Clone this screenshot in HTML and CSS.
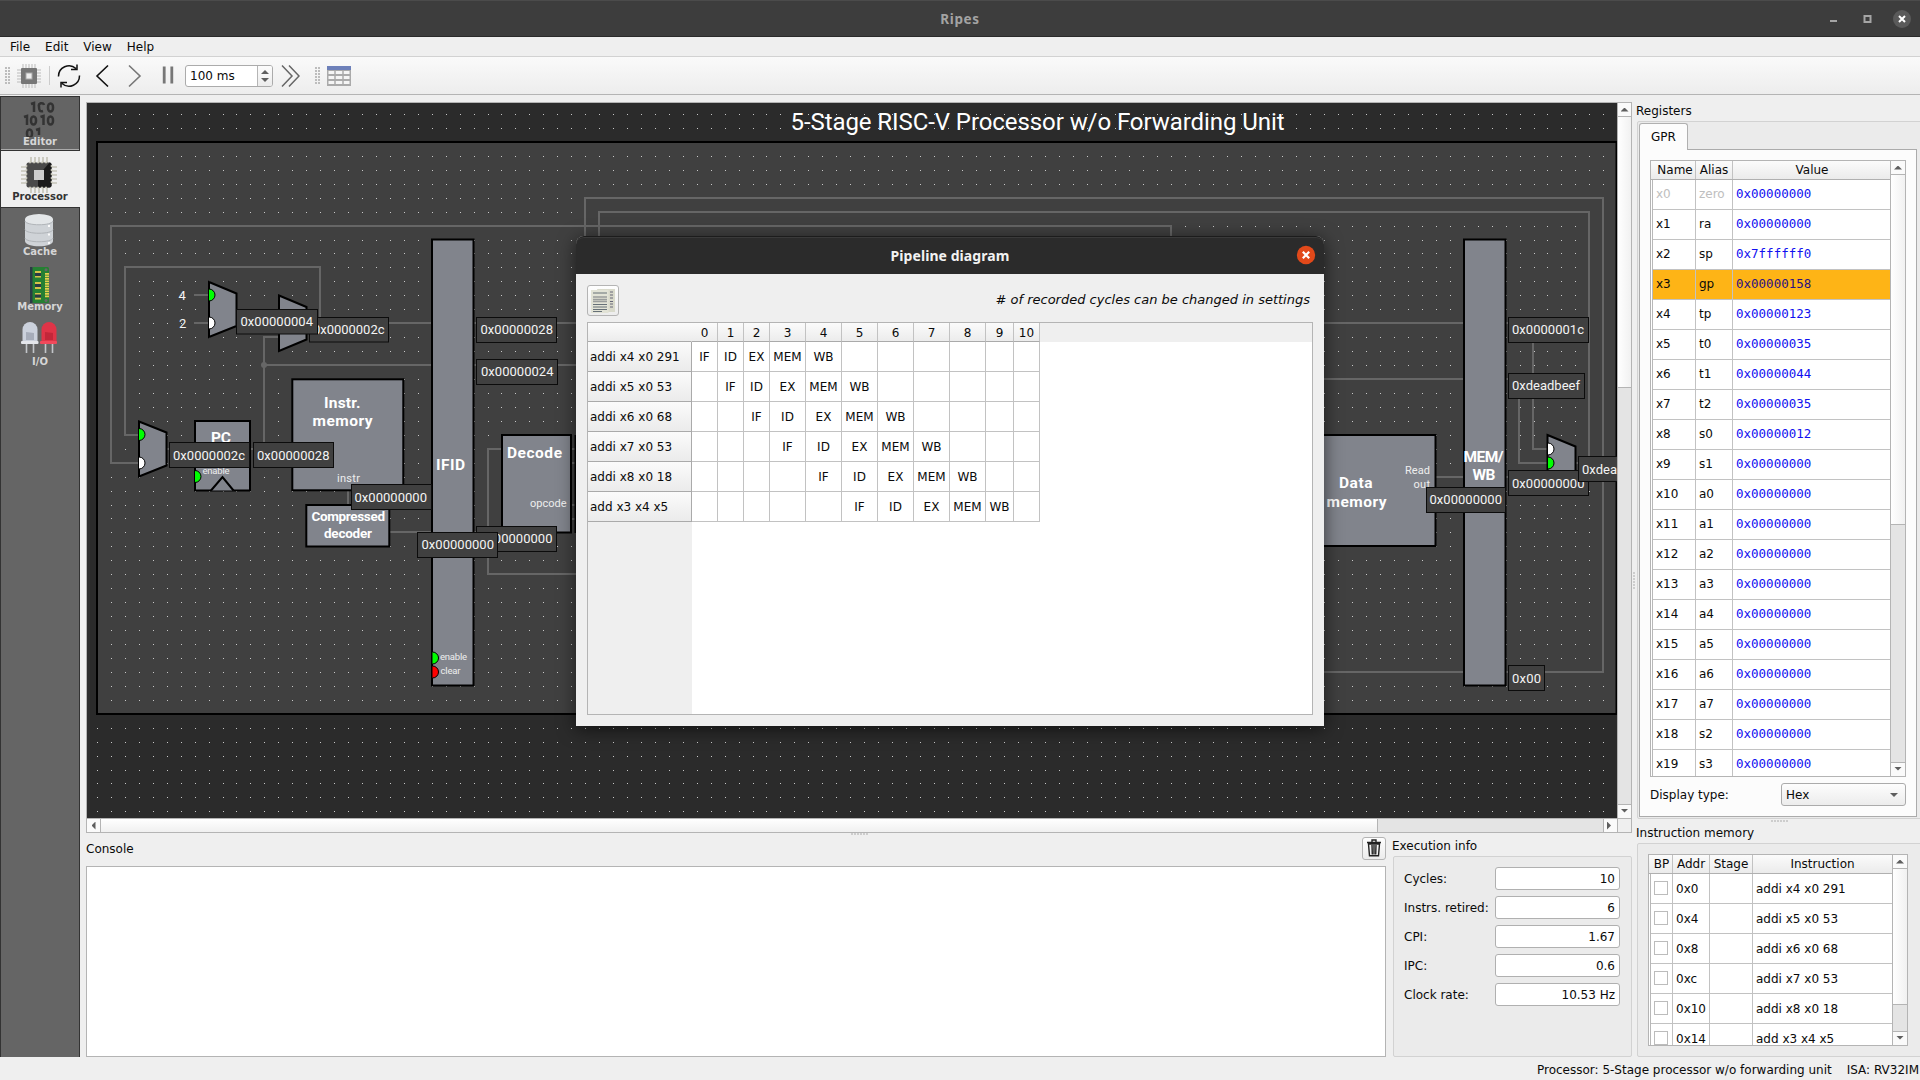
FILE: index.html
```html
<!DOCTYPE html>
<html lang="en">
<head>
<meta charset="utf-8">
<title>Ripes</title>
<link rel="stylesheet" href="styles.css">
</head>
<body>
<header class="titlebar">
  <span class="win-title">Ripes</span>
  <svg class="win-buttons" width="84" height="36" viewBox="0 0 84 36">
    <path d="M0 20h7" stroke="#a5a5a5" stroke-width="2"/>
    <rect x="34.500" y="15" width="6" height="6" fill="none" stroke="#a5a5a5" stroke-width="2"/>
    <circle cx="72" cy="18" r="9" fill="#5a5a5a"/>
    <path d="M69 15l6 6M75 15l-6 6" stroke="#fff" stroke-width="2"/>
  </svg>
</header>
<nav class="menubar"><span>File</span><span>Edit</span><span>View</span><span>Help</span></nav>
<div class="toolbar">
  <i class="grip"></i>
  <svg class="t-chip" width="24" height="24" viewBox="0 0 24 24">
    <path d="M6 0v24M9 0v24M12 0v24M15 0v24M18 0v24M0 6h24M0 9h24M0 12h24M0 15h24M0 18h24" stroke="#bbb"/>
    <rect x="4" y="4" width="16" height="16" rx="1" fill="#777"/><rect x="9" y="9" width="6" height="6" fill="#eee" stroke="#aaa"/>
  </svg>
  <i class="sep"></i>
  <svg class="t-reload" width="24" height="24" viewBox="0 0 24 24" fill="none" stroke="#111" stroke-width="1.500">
    <path d="M1.500 12.500A10.500 10.500 0 0 1 19 4.500M22.500 11.500A10.500 10.500 0 0 1 5 19.500M14 5.500h6V0.500M10 18.500H4v5"/>
  </svg>
  <svg class="t-back" width="14" height="24" viewBox="0 0 14 24" fill="none" stroke="#111" stroke-width="1.600"><path d="M13 1.500L2 12l11 10.500"/></svg>
  <svg class="t-next" width="14" height="24" viewBox="0 0 14 24" fill="none" stroke="#777" stroke-width="1.600"><path d="M1 1.500L12 12 1 22.500"/></svg>
  <svg class="t-pause" width="12" height="18" viewBox="0 0 12 18"><path d="M2.200 .5v17M9.800 .5v17" stroke="#777" stroke-width="2.800"/></svg>
  <div class="spin"><span>100 ms</span><div class="spin-arrows">
    <svg width="8" height="12" viewBox="0 0 8 12" fill="#5e5e5e"><path d="M0 4l4-4 4 4zM0 8l4 4 4-4z"/></svg></div></div>
  <svg class="t-ff" width="19" height="24" viewBox="0 0 19 24" fill="none" stroke="#666" stroke-width="1.500"><path d="M1 1.500L11 12 1 22.500M8 1.500L18 12 8 22.500"/></svg>
  <i class="grip grip2"></i>
  <svg class="t-table" width="24" height="20" viewBox="0 0 24 20"><rect width="24" height="20" fill="#aaa"/><rect width="24" height="4" fill="#6d80b9"/>
    <path d="M1.500 6.500h21M1.500 11.500h21M1.500 16.500h21" stroke="#f5f5f5" stroke-width="3"/><path d="M8 4v16M16 4v16" stroke="#aaa" stroke-width="1.500"/></svg>
</div>

<main class="main">
  <aside class="sidebar">
    <div class="tab tab-editor">
      <svg width="36" height="36" viewBox="0 0 36 36" fill="none" stroke="#333" stroke-width="2.500">
        <path d="M10 3l3-1v9M27 6a2.500 3.500 0 0 1 5 0v1a2.500 3.500 0 0 1-5 0zM23 4a2.500 2.500 0 0 0-5 1.500c0 4 1 5.500 4 4.500M3 16l3-1v9M19.500 16l3-1v9M10 19a2.500 3.500 0 0 1 5 0v1a2.500 3.500 0 0 1-5 0zM27 19a2.500 3.500 0 0 1 5 0v1a2.500 3.500 0 0 1-5 0zM6 32a2.500 3.500 0 0 1 5 0v1a2.500 3.500 0 0 1-5 0zM15 29l3-1v6"/>
      </svg><b>Editor</b></div>
    <div class="tab selected">
      <svg width="36" height="36" viewBox="0 0 36 36">
        <path d="M10 0v36M14 0v36M18 0v36M22 0v36M26 0v36M0 10h36M0 14h36M0 18h36M0 22h36M0 26h36" stroke="#c6c5b9" stroke-width="1.700"/>
        <rect x="5.500" y="5.500" width="25" height="25" rx="2" fill="#4a4a4a"/><path d="M28.500 5.500a2 2 0 0 1 2 2v21a2 2 0 0 1-2 2H17V19z" fill="#1b1b1b"/>
        <path d="M5.500 8v20M30.500 8v20M8 5.500h20M8 30.500h20" stroke="#c6c5b9" stroke-width="1.500" stroke-dasharray="2"/>
        <rect x="13" y="13" width="10" height="10" fill="#ccc"/></svg><b>Processor</b></div>
    <div class="tab">
      <svg width="36" height="36" viewBox="0 0 36 36"><path d="M4 7v22c0 7 28 7 28 0V7z" fill="#cfd3d7"/><ellipse cx="18" cy="7.500" rx="14" ry="5.500" fill="#e3e6e8"/>
        <path d="M4 9c1 5 27 5 28 0M4 17.500c1 5 27 5 28 0M4 26c1 5 27 5 28 0" fill="none" stroke="#b0b4b8"/><path d="M28 13v2M28 21.500v2M28 30v2" stroke="#fff" stroke-width="1.800"/></svg><b>Cache</b></div>
    <div class="tab">
      <svg width="36" height="36" viewBox="0 0 36 36"><rect x="11" y="0" width="17" height="36" rx="1.500" fill="#258033"/><rect x="9" y="0" width="2.500" height="36" fill="#2b3b45"/>
        <path d="M14 5h6M14 9.500h6M14 16h6M14 21h6M14 27h6M14 31.500h6" stroke="#d6c34a" stroke-width="2"/><path d="M14 7.500h6M14 18.500h6M14 29h6" stroke="#2b3b45" stroke-width="3"/>
        <path d="M26 6v25" stroke="#e5cf4e" stroke-width="4" stroke-dasharray="1.700 .8"/><circle cx="25" cy="2.800" r="1.500" fill="#666"/><circle cx="25" cy="33.500" r="1.500" fill="#666"/></svg><b>Memory</b></div>
    <div class="tab">
      <svg width="36" height="36" viewBox="0 0 36 36"><path d="M5.500 22v9M12.500 22v9M24.500 22v9M31.500 22v9" stroke="#c2c5c9" stroke-width="1.600"/>
        <path d="M1.500 20V7.500a7.500 7.500 0 0 1 15 0V20z" fill="#cbd1dc"/><path d="M20.500 20V7.500a7.500 7.500 0 0 1 15 0V20z" fill="#df3447"/>
        <path d="M5 10l8 1v7H5z" fill="#606878" opacity=".35"/><path d="M24 10l8 1v7h-8z" fill="#a01828" opacity=".45"/><rect x="0" y="19" width="17.500" height="3" rx="1" fill="#e4e6eb"/><rect x="19" y="19" width="17" height="3" rx="1" fill="#f0495b"/></svg><b>I/O</b></div>
  </aside>

  <section class="center">
    <div class="view">
      <svg class="diagram" width="1530" height="715" viewBox="87 103 1530 715">
        <rect x="87" y="103" width="1530" height="715" fill="#2b2b2b"/>
        <rect x="97" y="142" width="1519.500" height="572" fill="#404040"/>
        <path id="dots" fill="none" stroke="#c8c8c8"/>
        <rect x="97" y="142" width="1519.500" height="572" fill="none" stroke="#000" stroke-width="2"/>
        <g class="wires">
          <path d="M139 463H109M109 463M139 435H125V267H320V323H432M139 463H109M194 295h14M194 323h14M279 337H264V449H195M264 365H432M474 323H600M474 365H600M167 449h28M250 449h43" stroke="none"/>
          <path d="M139 463H111V226H1171v60M139 435H125V267H320V323H432M194 295h14M194 323h14M279 337H264V449H195M264 365H432M474 323H600M474 365H600M167 449h28M250 449h43"/>
          <path d="M585 240V198H1603V672H1300M599 240V212H1589V463H1575M502 449H488V574H600M348 490v15M390 532h42M474 532h14M570 449h8M570 463h8M570 505h8M570 519h8"/>
          <path d="M1300 323H1464M1300 379H1464M1506 323H1533V449H1547M1506 379H1519V463H1547M1436 477h28M1506 477h8M1506 672h8"/>
        </g>
        <circle cx="264" cy="365" r="3" fill="#666"/>
        <g class="blocks">
          <rect x="432" y="239.500" width="41.500" height="446"/><rect x="1464" y="239.500" width="41.500" height="446"/>
          <rect x="292.300" y="379.300" width="111" height="111"/><rect x="306.300" y="505" width="83" height="41.500"/>
          <rect x="195" y="421" width="55" height="69.500"/><rect x="502" y="435" width="69" height="97.500"/>
          <rect x="1300" y="435" width="135.500" height="111"/>
          <path d="M209 282l27.500 11.500v32.500l-27.500 11zM279 295.500l27.500 11.500v32.500l-27.500 11.500zM139 421.500l27.500 11v33l-27.500 11zM1547.500 435l28 11.500v32.500l-28 11.500zM211 490.500l11.500-13.500 11 13.500"/>
          <path d="M575.500 435v98"/>
        </g>
        <g stroke="#000">
          <path d="M209 289a6 6 0 0 1 0 12M139 428.500a6 6 0 0 1 0 12M195 470.500a6 6 0 0 1 0 12M432.500 652a6 6 0 0 1 0 12M1548 457a6 6 0 0 1 0 12" fill="#0f0"/>
          <path d="M209 317a6 6 0 0 1 0 12M139 457a6 6 0 0 1 0 12M1548 443a6 6 0 0 1 0 12" fill="#fff"/>
          <path d="M432.500 666a6 6 0 0 1 0 12" fill="#f00"/>
        </g>
        <g class="names">
          <text x="211" y="442.500" textLength="20">PC</text><text x="324" y="408" textLength="36.500">Instr.</text><text x="312.500" y="426" textLength="60">memory</text>
          <text x="436" y="470" textLength="29">IFID</text><text x="507" y="458" textLength="55">Decode</text>
          <text class="sm" x="311.500" y="521" textLength="73.500">Compressed</text><text class="sm" x="324" y="538" textLength="48">decoder</text>
          <text x="1339" y="488" textLength="33.500">Data</text><text x="1326.500" y="507" textLength="60">memory</text>
          <text x="1463.500" y="462" textLength="40">MEM/</text><text x="1472.500" y="480" textLength="23">WB</text>
        </g>
        <g class="ports">
          <text x="337" y="482" textLength="23">instr</text><text x="530" y="507" textLength="36.500">opcode</text>
          <text x="1405" y="474" textLength="25">Read</text><text x="1413.500" y="488" textLength="16.500">out</text>
          <text class="xs" x="202.500" y="474" textLength="27">enable</text><text class="xs" x="440" y="660" textLength="27">enable</text><text class="xs" x="440.500" y="674" textLength="20">clear</text>
        </g>
        <text class="heading" x="790.500" y="130" textLength="494">5-Stage RISC-V Processor w/o Forwarding Unit</text>
        <g class="values">
          <text x="178.500" y="300">4</text><text x="179" y="328">2</text>
          <rect x="309.500" y="317.500" width="79" height="24.500"/><text x="313" y="334" textLength="71.500">0x0000002c</text>
          <rect x="236.500" y="309.500" width="81" height="24.500"/><text x="240.500" y="326" textLength="72.500">0x00000004</text>
          <rect x="476.500" y="317.500" width="80" height="25"/><text x="480.500" y="334" textLength="72.500">0x00000028</text>
          <rect x="476.500" y="359.500" width="81" height="25"/><text x="481" y="376" textLength="72.500">0x00000024</text>
          <rect x="169.500" y="442.500" width="80" height="25"/><text x="173" y="460" textLength="72">0x0000002c</text>
          <rect x="253.500" y="442.500" width="80" height="25"/><text x="257" y="460" textLength="72.500">0x00000028</text>
          <rect x="351.500" y="484.500" width="80" height="25"/><text x="354.500" y="502" textLength="72.500">0x00000000</text>
          <rect x="476.500" y="526.500" width="80" height="25"/><text x="480" y="543" textLength="72.500">0x00000000</text>
          <rect x="417.500" y="532.500" width="80" height="25"/><text x="421.500" y="549" textLength="72.500">0x00000000</text>
          <rect x="1508.500" y="317.500" width="80" height="25"/><text x="1512" y="334" textLength="72">0x0000001c</text>
          <rect x="1508.500" y="373.500" width="76" height="25"/><text x="1512" y="390" textLength="68">0xdeadbeef</text>
          <rect x="1426.500" y="487.500" width="79" height="25"/><text x="1429.500" y="504" textLength="72.500">0x00000000</text>
          <rect x="1508.500" y="470.500" width="80" height="25"/><text x="1512" y="488" textLength="72.500">0x00000000</text>
          <rect x="1578.500" y="456.500" width="76" height="25"/><text x="1582" y="474" textLength="68">0xdeadbeef</text>
          <rect x="1508.500" y="665.500" width="36" height="25"/><text x="1512" y="683" textLength="29">0x00</text>
        </g>
      </svg>
      <div class="vbar vbar-view"><i class="btn up"></i><i class="thumb"></i><i class="trough"></i><i class="btn down"></i></div>
      <div class="hbar"><i class="btn left"></i><i class="thumb"></i><i class="trough"></i><i class="btn right"></i></div>
      <div class="corner"></div>
    </div>
    <div class="bottom">
      <div class="console">
        <div class="console-head"><span>Console</span><button class="trash"><svg width="14" height="18" viewBox="0 0 14 18" fill="none" stroke="#222" stroke-width="1.400"><path d="M0 3.500h14M5 3V1h4v2M1.500 5l1 11.800h9l1-11.800zM5 6l.3 9.500M7 6v9.500M9 6l-.3 9.500"/></svg></button></div>
        <div class="console-box"></div>
      </div>
      <div class="exec">
        <div class="exec-title">Execution info</div>
        <div class="group exec-grid">
          <span>Cycles:</span><div class="field">10</div><span>Instrs. retired:</span><div class="field">6</div>
          <span>CPI:</span><div class="field">1.67</div><span>IPC:</span><div class="field">0.6</div><span>Clock rate:</span><div class="field">10.53 Hz</div>
        </div>
      </div>
    </div>
    <i class="hdots hdots-center"></i>
  </section>

  <section class="right">
    <div class="reg-title">Registers</div>
    <div class="group reg-group">
      <div class="gpr-tab">GPR</div>
      <div class="gpr-panel">
        <div class="tbl reg-tbl">
          <div class="tbl-body">
            <div class="row head"><span>Name</span><span>Alias</span><span>Value</span></div>
            <div id="registers"></div>
          </div>
          <div class="vbar vbar-reg"><i class="btn up"></i><i class="thumb"></i><i class="trough"></i><i class="btn down"></i></div>
        </div>
        <div class="display"><span>Display type:</span><div class="combo"><span>Hex</span><svg width="8" height="4" viewBox="0 0 8 4"><path d="M0 0h8L4 4z" fill="#5e5e5e"/></svg></div></div>
      </div>
    </div>
    <div class="mem-title">Instruction memory</div>
    <div class="group mem-group">
      <div class="tbl mem-tbl">
        <div class="tbl-body">
          <div class="row head"><span>BP</span><span>Addr</span><span>Stage</span><span>Instruction</span></div>
          <div id="instructions"></div>
        </div>
        <div class="vbar vbar-mem"><i class="btn up"></i><i class="thumb"></i><i class="trough"></i><i class="btn down"></i></div>
      </div>
    </div>
    <i class="vdots"></i><i class="hdots hdots-right"></i>
  </section>
</main>
<footer class="status"><span>Processor: 5-Stage processor w/o forwarding unit</span><span>ISA: RV32IM</span></footer>

<div class="dialog">
  <div class="dialog-title">Pipeline diagram
    <svg class="dialog-close" width="20" height="20" viewBox="0 0 20 20"><circle cx="10" cy="10" r="9.200" fill="#e2491a"/><path d="M6.800 6.800l6.400 6.400M13.200 6.800l-6.400 6.400" stroke="#fff" stroke-width="2.200"/></svg>
  </div>
  <div class="dialog-tools">
    <button class="copy"><svg width="24" height="24" viewBox="0 0 24 24"><path d="M6 0h18v23H13z" fill="#d9dacb"/><path d="M0 1h17.500v23H0z" fill="#e2e3d6"/><path d="M19 3h3M19 6h3M19 9h3M19 12.500h3M19 15h3M19 18h3" stroke="#667"/><path d="M2 4h14M2 15.500h14M2 18h14M2 20.500h14M2 22.500h9" stroke="#667077"/><path d="M2 8h14M2 10.500h14M2 12.500h14" stroke="#9a9d9c" stroke-width="1.700"/></svg></button>
    <em># of recorded cycles can be changed in settings</em>
  </div>
  <div class="pipe"><div class="pipe-head" id="cycles"></div><div id="stages"></div><div class="pipe-rest"></div></div>
</div>
<script src="script.js"></script>
</body>
</html>
```
FILE: styles.css
```css
* { box-sizing: border-box; }
body { margin: 0; width: 1920px; height: 1080px; overflow: hidden; display: flex; flex-direction: column; background: #efefef; color: #0a0a0a; font: 12px/16px "DejaVu Sans", sans-serif; position: relative; white-space: nowrap; }
i, em { flex: none; }
svg { display: block; flex: none; }
.titlebar { height: 37px; flex: none; background: #3d3d3d; border-top: 1px solid #4b4b4b; border-bottom: 1px solid #2a2a2a; display: grid; grid-template-columns: 84px 1fr 84px; align-items: center; justify-items: center; color: #a3a3a3; padding-right: 6px; }
.win-title { grid-column: 2; font: bold 13.5px/20px "Noto Sans", sans-serif; letter-spacing: .6px; margin-left: 6px; }
.menubar { height: 20px; flex: none; border-bottom: 1px solid #d2d2d2; display: flex; gap: 15px; padding: 2px 10px 0; }
.toolbar { height: 38px; flex: none; display: flex; align-items: center; background: linear-gradient(#fafafa, #ededed); border-bottom: 1px solid #b4b4b4; }
.grip { width: 5px; height: 17px; margin-left: 5px; background: radial-gradient(circle at 1px 1px, #bbb .7px, transparent 1px) 0 0 / 3px 3px; }
.t-chip { margin-left: 7px; }
.sep { width: 1px; height: 19px; background: #ccc; margin-left: 8px; }
.t-reload { margin-left: 7px; }
.t-back { margin-left: 14px; }
.t-next { margin-left: 19px; }
.t-pause { margin-left: 20px; margin-top: -2px; }
.spin { width: 88px; height: 22px; margin-left: 11px; border: 1px solid #ababab; border-radius: 3px; background: #fff; display: flex; line-height: 21px; padding-left: 4px; justify-content: space-between; }
.spin-arrows { width: 15px; border-left: 1px solid #b5b5b5; background: linear-gradient(#fcfcfc, #ececec); border-radius: 0 2px 2px 0; display: grid; place-items: center; }
.t-ff { margin-left: 8px; }
.grip2 { margin-left: 15px; }
.t-table { margin-left: 7px; }

.main { height: 962px; flex: none; display: flex; position: relative; }
.sidebar { width: 80px; flex: none; margin-top: 1px; background: #656565; border: solid #333; border-width: 0 1px; }
.tab { height: 55px; display: flex; flex-direction: column; align-items: center; padding: 6px 2px 0 0; color: #d6d6d6; font-size: 10px; line-height: 10px; }
.tab svg { margin-bottom: -1px; }
.tab b { padding-left: 2px; }
.tab-editor { border-top: 1px solid #333; border-bottom: 1px solid #333; box-shadow: inset 0 -1px #aaa; padding-top: 4px; background: #646464; }
.tab-editor b { margin-top: 1px; }
.tab.selected { background: #efefef; color: #333; margin-right: -1px; height: 56px; padding-right: 3px; }
.tab.selected + .tab { border-top: 1px solid #333; padding-top: 4px; height: 54px; }

.center { width: 1546px; flex: none; margin-left: 6px; padding-top: 7px; }
.view { width: 1546px; height: 731px; border: 1px solid #b4b4b4; display: grid; grid-template-columns: 1530px 14px; grid-template-rows: 715px 14px; }
.diagram { font-family: Roboto, sans-serif; }
.wires { fill: none; stroke: #666; stroke-width: 2; }
.blocks { fill: #81848c; stroke: #000; stroke-width: 2; }
.names { fill: #fff; font-weight: bold; font-size: 15.5px; }
.names .sm { font-size: 13.500px; }
.ports { fill: #eee; font-size: 11px; }
.ports .xs { font-size: 9.500px; }
.heading { fill: #fff; font-size: 24px; }
.values { font-size: 13px; fill: #f4f4f4; }
.values rect { fill: #404040; stroke: #0c0c0c; }
.vbar { display: flex; flex-direction: column; border-left: 1px solid #b4b4b4; background: #e4e4e4; }
.hbar { display: flex; border-top: 1px solid #b4b4b4; background: #e4e4e4; }
.corner { border: solid #b4b4b4; border-width: 1px 0 0 1px; }
.btn { display: grid; place-items: center; background: #fafafa; flex: none; }
.btn::before { content: ""; background: #5e5e5e; width: 8px; height: 4px; }
.vbar .btn { height: 14px; }
.hbar .btn { width: 14px; }
.up { border-bottom: 1px solid #b4b4b4; }
.down { border-top: 1px solid #b4b4b4; padding-bottom: 2px; }
.left { border-right: 1px solid #b4b4b4; }
.right.btn { border-left: 1px solid #b4b4b4; padding-right: 3px; }
.up::before { clip-path: polygon(0 100%, 50% 0, 100% 100%); }
.down::before { clip-path: polygon(0 0, 100% 0, 50% 100%); }
.hbar .btn::before { width: 4px; height: 8px; }
.left::before { clip-path: polygon(100% 0, 100% 100%, 0 50%); }
.right.btn::before { clip-path: polygon(0 0, 100% 50%, 0 100%); }
.thumb { background: linear-gradient(90deg, #fff, #f1f1f1); flex: none; }
.hbar .thumb { background: linear-gradient(#fff, #f0f0f0); border-right: 1px solid #b4b4b4; width: 1277px; }
.vbar .thumb { border-bottom: 1px solid #b4b4b4; }
.vbar-view .thumb { height: 271px; }
.trough { flex: 1; }

.bottom { display: flex; height: 224px; }
.console { width: 1300px; flex: none; }
.console-head { height: 33px; display: flex; justify-content: space-between; padding-top: 4px; }
.console-head span { padding-top: 4px; }
button { padding: 0; border: 1px solid #b4b4b4; border-radius: 3px; background: linear-gradient(#fefefe, #ececec); display: grid; place-items: center; }
.trash { width: 24px; height: 23px; }
.trash svg { margin-top: -1px; }
.console-box { height: 191px; border: 1px solid #b4b4b4; background: #fff; }
.exec { margin-left: 6px; width: 240px; }
.exec-title { padding-top: 5px; height: 23px; }
.group { border: 1px solid #d2d2d2; background: #ebebeb; border-radius: 2px; }
.exec-grid { margin-left: 1px; height: 201px; padding: 10px 11px 10px 10px; display: grid; grid-template-columns: 1fr 125px; grid-auto-rows: 23px; row-gap: 6px; line-height: 24px; }
.field { background: #fff; border: 1px solid #b0b0b0; border-radius: 3px; text-align: right; padding-right: 4px; line-height: 22px; }

.right:not(.btn) { width: 284px; flex: none; margin-left: 4px; padding-top: 8px; }
.reg-title { height: 18px; }
.reg-group { width: 290px; height: 698px; margin-left: 1px; padding: 1px 0 0 1px; }
.gpr-tab { width: 49px; height: 27px; background: #fcfcfc; border: 1px solid #b0b0b0; border-bottom: 0; border-radius: 3px 3px 0 0; padding: 5px 0 0 11px; position: relative; z-index: 1; margin-bottom: -1px; }
.gpr-panel { width: 278px; height: 668px; border: 1px solid #ababab; background: #fcfcfc; padding: 10px; }
.tbl { border: 1px solid #b4b4b4; background: #fff; display: flex; overflow: hidden; }
.tbl-body { flex: 1; overflow: hidden; }
.reg-tbl { width: 256px; height: 617px; }
.reg-tbl .row { display: grid; grid-template-columns: 43px 37px 158px; grid-template-rows: 100%; }
.row { height: 30px; margin-left: 1px; border-left: 1px solid #b8b8b8; line-height: 28px; }
.row span { border: solid #c2c2c2; border-width: 0 1px 1px 0; padding-left: 3px; }
.row.head { height: 19px; margin-left: 0; padding-left: 2px; border-left: 0; line-height: 18px; text-align: center; background: linear-gradient(#fbfbfb, #ebebeb); border-bottom: 1px solid #b0b0b0; }
.row.head span { border-bottom: 0; padding: 0; }
.reg-tbl .head span:first-child { padding-left: 2px; }
.reg-tbl .head span:last-child { border-right: 0; }
.row.zero span:nth-child(-n+2) { color: #bebebe; }
.row.hot { background: #feb416; }
.row .val { color: #1010f0; font: 12.5px/28px "DejaVu Sans Mono", monospace; }
.hot .val { color: #2a1080; }
.vbar-reg, .vbar-mem { width: 15px; flex: none; }
.vbar-reg .thumb { height: 350px; }
.vbar-mem .thumb { height: 136px; }
.display { display: flex; justify-content: space-between; align-items: center; padding-top: 6px; width: 256px; }
.combo { width: 125px; height: 23px; border: 1px solid #ababab; border-radius: 3px; background: linear-gradient(#fdfdfd, #ececec); display: flex; align-items: center; justify-content: space-between; padding: 0 7px 0 4px; }
.mem-title { height: 24px; padding-top: 6px; }
.mem-group { width: 290px; height: 214px; margin-left: 1px; padding: 10px; }
.mem-tbl { width: 260px; height: 192px; }
.mem-tbl .row { display: grid; grid-template-columns: 22px 37px 43px 140px; grid-template-rows: 100%; line-height: 30px; }
.mem-tbl .row.head { line-height: 19px; }
.check { display: block; width: 14px; height: 14px; border: 1px solid #bcbcbc; background: #fff; margin-top: 7px; }
.hdots { position: absolute; width: 18px; height: 2px; background: radial-gradient(circle at 1px 1px, #ccc .7px, transparent 1px) 0 0 / 3px 3px; }
.hdots-center { left: 851px; top: 738px; }
.hdots-right { left: 1771px; top: 725px; }
.vdots { position: absolute; width: 2px; height: 18px; left: 1633px; top: 477px; background: radial-gradient(circle at 1px 1px, #ccc .7px, transparent 1px) 0 0 / 3px 3px; }
.status { flex: 1; display: flex; justify-content: flex-end; gap: 15px; padding: 5px 1px 0 0; }

.dialog { position: absolute; left: 576px; top: 236px; width: 748px; height: 490px; background: #efefef; border-radius: 8px 8px 0 0; box-shadow: 0 3px 18px rgba(0,0,0,.6); }
.dialog-title { height: 38px; background: #2b2b2b; border-radius: 8px 8px 0 0; border-top: 1px solid #1c1c1c; box-shadow: inset 0 1px #3a3a3a; color: #f2f2f2; font: bold 14px/37px "Noto Sans", sans-serif; letter-spacing: .06px; text-align: center; position: relative; }
.dialog-close { position: absolute; right: 8px; top: 8px; }
.dialog-tools { height: 48px; display: flex; justify-content: space-between; padding: 11px 14px 0 11px; }
.copy { width: 32px; height: 31px; }
.dialog-tools em { padding-top: 7px; font-size: 13px; }
.pipe { margin: 0 11px; width: 726px; height: 393px; background: #fff; border: 1px solid #b4b4b4; display: flex; flex-direction: column; }
.pipe-head { height: 19px; background: #efefef; }
.pipe-row { display: grid; grid-template-columns: 104px 26px 26px 26px 36px 36px 36px 36px 36px 36px 28px 26px; grid-template-rows: 100%; width: 452px; text-align: center; height: 30px; line-height: 30px; }
.pipe-row span { border: solid #c2c2c2; border-width: 0 1px 1px 0; }
.pipe-row .label { text-align: left; padding-left: 2px; line-height: 31px; background: linear-gradient(#fbfbfb, #ebebeb); border-color: #aaa; }
.pipe-row.cyc { height: 19px; line-height: 20px; background: linear-gradient(#fbfbfb, #ebebeb); }
.pipe-row.cyc span { border-bottom-color: #aaa; }
.pipe-row.cyc .label { border-right-color: transparent; background: none; }
.pipe-rest { flex: 1; width: 104px; background: #efefef; }
```
FILE: script.js
```js
const snap = n => Math.round(n * 13.947);
let dots = '';
for (let r = 0; r <= 50; r++)
  for (let c = 0; c <= 108; c++)
    dots += `M${97 + snap(c)} ${114.5 + snap(r)}h1`;
document.getElementById('dots').setAttribute('d', dots);

const alias = 'zero ra sp gp tp t0 t1 t2 s0 s1 a0 a1 a2 a3 a4 a5 a6 a7 s2 s3'.split(' ');
const value = { 2: '7ffffff0', 3: '00000158', 4: '00000123', 5: '00000035', 6: '00000044', 7: '00000035', 8: '00000012' };
document.getElementById('registers').innerHTML = alias.map((a, i) =>
  `<div class="row ${i === 0 ? 'zero' : i === 3 ? 'hot' : ''}"><span>x${i}</span><span>${a}</span><span class="val">0x${value[i] || '00000000'}</span></div>`).join('');

const program = ['addi x4 x0 291', 'addi x5 x0 53', 'addi x6 x0 68', 'addi x7 x0 53', 'addi x8 x0 18', 'add x3 x4 x5'];
document.getElementById('instructions').innerHTML = program.map((p, i) =>
  `<div class="row"><span><i class="check"></i></span><span>0x${(i * 4).toString(16)}</span><span></span><span>${p}</span></div>`).join('');

const stages = ['IF', 'ID', 'EX', 'MEM', 'WB'];
const cells = f => Array.from({ length: 11 }, (_, c) => `<span>${f(c)}</span>`).join('');
document.getElementById('cycles').innerHTML = `<div class="pipe-row cyc"><span class="label"></span>${cells(c => c)}</div>`;
document.getElementById('stages').innerHTML = program.map((p, i) =>
  `<div class="pipe-row"><span class="label">${p}</span>${cells(c => stages[c - i] || '')}</div>`).join('');
```
